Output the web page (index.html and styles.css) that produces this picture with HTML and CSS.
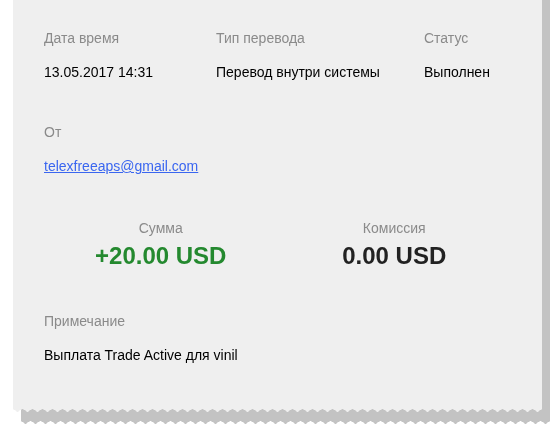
FILE: index.html
```html
<!DOCTYPE html>
<html lang="ru">
<head>
<meta charset="utf-8">
<title>Перевод</title>
<link rel="stylesheet" href="styles.css">
</head>
<body>
<div class="wrap">
  <div class="shadow"></div>
  <div class="card">
    <div class="grid3">
      <div class="field">
        <div class="label">Дата время</div>
        <div class="value">13.05.2017 14:31</div>
      </div>
      <div class="field">
        <div class="label">Тип перевода</div>
        <div class="value">Перевод внутри системы</div>
      </div>
      <div class="field">
        <div class="label">Статус</div>
        <div class="value">Выполнен</div>
      </div>
    </div>
    <div class="field block">
      <div class="label">От</div>
      <div class="value"><a class="link" href="#">telexfreeaps@gmail.com</a></div>
    </div>
    <div class="sums">
      <div class="sum">
        <div class="label">Сумма</div>
        <div class="amount plus">+20.00 USD</div>
      </div>
      <div class="sum">
        <div class="label">Комиссия</div>
        <div class="amount">0.00 USD</div>
      </div>
    </div>
    <div class="field block note">
      <div class="label">Примечание</div>
      <div class="value">Выплата Trade Active для vinil</div>
    </div>
  </div>
</div>
</body>
</html>
```
FILE: styles.css
```css
html, body {
  margin: 0;
  padding: 0;
  background: #ffffff;
}
body {
  font-family: "Liberation Sans", Arial, sans-serif;
  font-size: 14px;
  line-height: 20px;
  color: #000;
}
.wrap {
  display: grid;
  margin-left: 13px;
  width: 537px;
  margin-top: -20px;
}
.shadow,
.card {
  grid-area: 1 / 1;
  -webkit-mask: conic-gradient(from -56deg at bottom, #0000, #000 1deg 112deg, #0000 113deg) 50% / 10px 100%;
  mask: conic-gradient(from -56deg at bottom, #0000, #000 1deg 112deg, #0000 113deg) 50% / 10px 100%;
}
.shadow {
  background: #c3c3c3;
  margin: 12px 0 0 8px;
}
.card {
  background: #efefef;
  margin: 0 8px 12px 0;
  padding: 48px 31px 47px 31px;
}
.grid3 {
  display: grid;
  grid-template-columns: 172px 208px 1fr;
}
.field {
  display: flex;
  flex-direction: column;
  gap: 14px;
}
.block {
  margin-top: 40px;
}
.label {
  color: #8a8a8a;
}
.value {
  color: #000;
}
.link {
  color: #3a66f0;
  text-decoration: underline;
}
.sums {
  display: grid;
  grid-template-columns: 1fr 1fr;
  margin-top: 42px;
}
.sum {
  display: flex;
  flex-direction: column;
  align-items: center;
  gap: 4px;
}
.amount {
  font-size: 24px;
  line-height: 28px;
  font-weight: bold;
  color: #222;
}
.amount.plus {
  color: #24892f;
}
.block.note {
  margin-top: 41px;
}
```
